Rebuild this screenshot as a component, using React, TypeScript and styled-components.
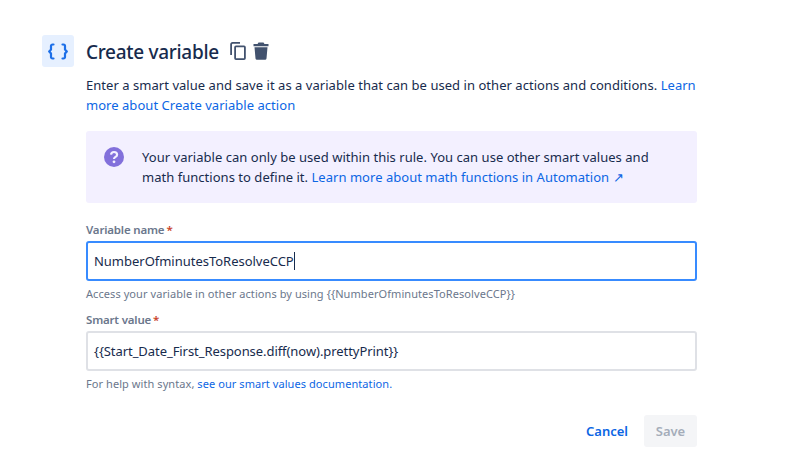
import React from "react";
import styled, { createGlobalStyle } from "styled-components";

const Global = createGlobalStyle`
  html, body { margin: 0; padding: 0; background: #fff; height: 100%; overflow: hidden; }
  body { font-family: "Noto Sans", "Open Sans", sans-serif; color: #172b4d; }
`;
const Page = styled.div`
  width: 800px; height: 450px; box-sizing: border-box;
  padding: 35px 103px 0 42px; display: flex; gap: 12px;
`;
const IconBox = styled.div`
  width: 32px; height: 32px; flex: none; border-radius: 3px; background: #e6f0ff;
  display: flex; align-items: center; justify-content: center; color: #1d6fe8;
`;
const Body = styled.div` flex: 1; min-width: 0; display: flex; flex-direction: column; `;
const Header = styled.div` display: flex; align-items: center; height: 34px; `;
const Title = styled.h1`
  margin: 0; font-size: 19px; font-weight: 500; letter-spacing: -0.3px; color: #172b4d; line-height: 34px;
`;
const Tools = styled.div` display: flex; align-items: center; gap: 5px; margin: -2px 0 0 10px; color: #42526e; `;
const Intro = styled.p`
  margin: 6px 0 0; font-size: 13px; line-height: 20px; letter-spacing: 0.04px; color: #172b4d;
`;
const Link = styled.a` color: #0c66e4; text-decoration: none; `;
const Panel = styled.div`
  margin-top: 16px; height: 72px; box-sizing: border-box; background: #f3f0ff; border-radius: 3px;
  padding: 16px; display: flex; gap: 15px; align-items: flex-start;
`;
const PanelIcon = styled.div` width: 24px; height: 24px; flex: none; margin-top: -1px; margin-left: 1px; `;
const PanelText = styled.p`
  margin: 0; max-width: 530px; font-size: 13px; line-height: 20px; letter-spacing: 0.03px; color: #172b4d;
`;
const Label = styled.label<{ $top: number }>`
  display: block; margin-top: ${p => p.$top}px; font-size: 11.5px; font-weight: 600; line-height: 16px;
  letter-spacing: -0.18px; color: #6b778c;
`;
const Star = styled.span` color: #c9432a; margin-left: 2px; `;
const Input = styled.div<{ $focus?: boolean; $tracking: number }>`
  margin-top: 3px; height: 40px; box-sizing: border-box; border-radius: 3px;
  border: 2px solid ${p => (p.$focus ? "#388bff" : "#dfe1e6")};
  padding: 0 6px; display: flex; align-items: center;
  font-size: 13px; letter-spacing: ${p => p.$tracking}px; color: #172b4d;
`;
const Caret = styled.span` display: inline-block; width: 1px; height: 18px; background: #172b4d; `;
const Help = styled.div`
  margin-top: 5px; font-size: 11px; line-height: 16px; letter-spacing: 0.07px; color: #6b778c;
`;
const Actions = styled.div` margin-top: 23px; display: flex; justify-content: flex-end; align-items: center; gap: 16px; `;
const Cancel = styled.button`
  border: 0; background: none; padding: 0; height: 32px; font: 600 13px "Noto Sans", sans-serif; color: #0c66e4;
`;
const Save = styled.button`
  border: 0; background: #f4f5f7; border-radius: 3px; width: 53px; height: 32px;
  font: 600 13px "Noto Sans", sans-serif; color: #a5adba;
`;

export default function App() {
  return (
    <Page>
      <Global />
      <IconBox>
        <svg width="20" height="17" viewBox="0 0 20 17" fill="none" stroke="currentColor" strokeWidth="2.2" strokeLinecap="round" strokeLinejoin="round">
          <path d="M5.500 1.500h-1A1.500 1.500 0 0 0 3 3v3.500L1.200 8.500 3 10.500V14a1.500 1.500 0 0 0 1.500 1.500h1" />
          <path d="M14.500 1.500h1A1.500 1.500 0 0 1 17 3v3.500l1.800 2-1.800 2V14a1.500 1.500 0 0 1-1.500 1.500h-1" />
        </svg>
      </IconBox>
      <Body>
        <Header>
          <Title>Create variable</Title>
          <Tools>
            <svg width="18" height="20" viewBox="0 0 18 20" fill="currentColor">
              <path d="M3.500 1H11v1.800H3.700a.7.7 0 0 0-.7.7V14H1.200V3.300C1.200 2 2.200 1 3.500 1z" />
              <path fillRule="evenodd" d="M7 4.500h8a1.800 1.800 0 0 1 1.800 1.800v11a1.800 1.800 0 0 1-1.800 1.800H7a1.800 1.800 0 0 1-1.800-1.800v-11A1.800 1.800 0 0 1 7 4.500zm0 1.800v11h8v-11H7z" />
            </svg>
            <svg width="18" height="20" viewBox="0 0 18 20" fill="currentColor">
              <path d="M6.500 1.500h5L12.500 3H16.500v2.200h-15V3h4z" />
              <path d="M2.500 6.200h13l-1 11.300a1.500 1.500 0 0 1-1.500 1.300H5a1.500 1.500 0 0 1-1.500-1.300z" />
            </svg>
          </Tools>
        </Header>
        <Intro>
          Enter a smart value and save it as a variable that can be used in other actions and conditions. <Link>Learn more about Create variable action</Link>
        </Intro>
        <Panel>
          <PanelIcon>
            <svg width="22" height="22" viewBox="0 0 22 22">
              <circle cx="11" cy="11" r="10" fill="#8270db" />
              <path d="M8 8.600a3 3 0 0 1 3-2.600c1.800 0 3.100 1.100 3.100 2.700 0 2.300-3.100 2.200-3.100 4.300" fill="none" stroke="#f3f0ff" strokeWidth="2.200" />
              <circle cx="11" cy="15.800" r="1.400" fill="#f3f0ff" />
            </svg>
          </PanelIcon>
          <PanelText>
            Your variable can only be used within this rule. You can use other smart values and math functions to define it. <Link>Learn more about math functions in Automation ↗</Link>
          </PanelText>
        </Panel>
        <Label $top={19}>Variable name<Star>*</Star></Label>
        <Input $focus $tracking={-0.02}>NumberOfminutesToResolveCCP<Caret /></Input>
        <Help>Access your variable in other actions by using {"{{NumberOfminutesToResolveCCP}}"}</Help>
        <Label $top={10}>Smart value<Star>*</Star></Label>
        <Input $tracking={-0.06}>{"{{Start_Date_First_Response.diff(now).prettyPrint}}"}</Input>
        <Help>For help with syntax, <Link>see our smart values documentation.</Link></Help>
        <Actions>
          <Cancel>Cancel</Cancel>
          <Save>Save</Save>
        </Actions>
      </Body>
    </Page>
  );
}
